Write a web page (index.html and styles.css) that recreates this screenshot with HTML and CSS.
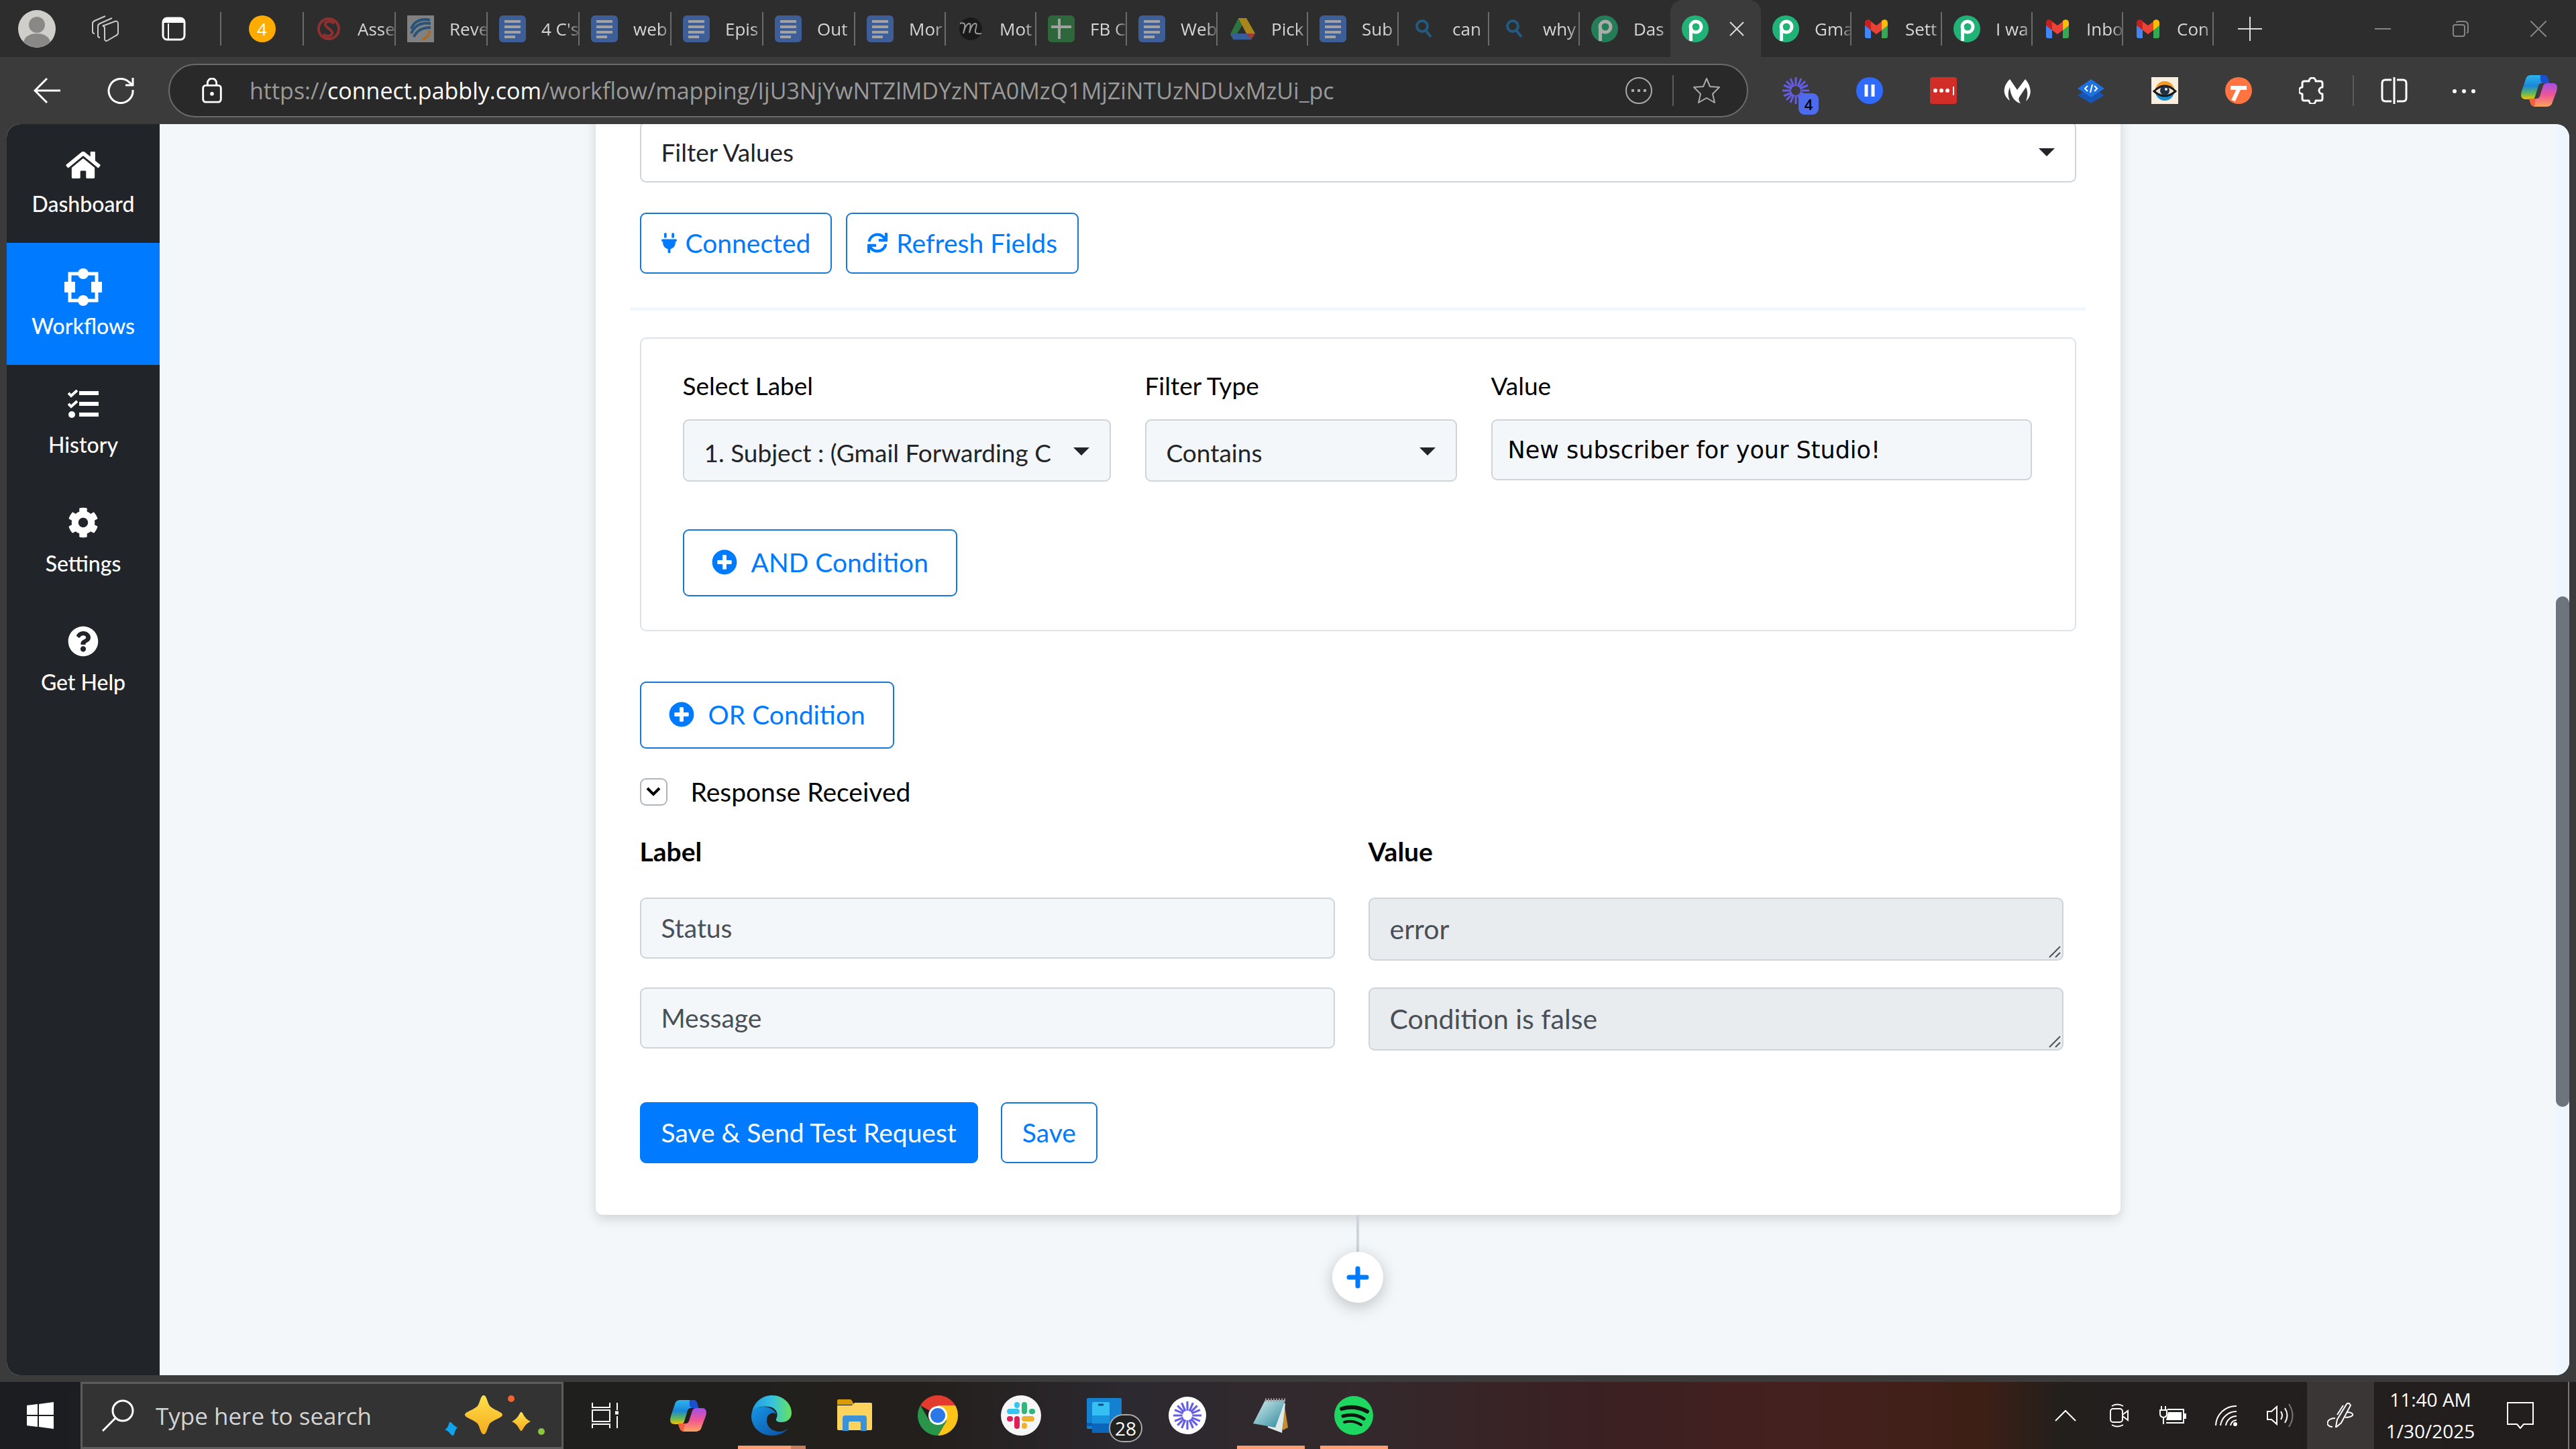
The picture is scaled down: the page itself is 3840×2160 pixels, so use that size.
FILE: index.html
```html
<!DOCTYPE html>
<html lang="en">
<head>
  <meta charset="UTF-8" />
  <title>Pabbly Connect</title>
  <link rel="stylesheet" href="styles.css">
</head>
<body>
  <!-- Shared icons -->
  <svg class="defs" aria-hidden="true">
    <defs>
      <linearGradient id="cpA" x1="0" y1="0" x2="0" y2="1">
        <stop offset="0" stop-color="#2bb5ef"/><stop offset=".45" stop-color="#1a86d8"/><stop offset=".75" stop-color="#5fb65c"/><stop offset="1" stop-color="#f5c400"/>
      </linearGradient>
      <linearGradient id="cpB" x1="0" y1="0" x2="0" y2="1">
        <stop offset="0" stop-color="#a44fe8"/><stop offset=".5" stop-color="#ee5596"/><stop offset="1" stop-color="#ffa35c"/>
      </linearGradient>
      <linearGradient id="edgeA" x1="0" y1="0" x2="1" y2="0">
        <stop offset="0" stop-color="#1f9be0"/><stop offset=".5" stop-color="#35c1e0"/><stop offset="1" stop-color="#66e35a"/>
      </linearGradient>
      <linearGradient id="edgeB" x1="0" y1="0" x2="1" y2="1">
        <stop offset="0" stop-color="#1795e6"/><stop offset="1" stop-color="#0b4f9e"/>
      </linearGradient>
      <linearGradient id="star" x1="0" y1="0" x2="0" y2="1">
        <stop offset="0" stop-color="#ffe14d"/><stop offset="1" stop-color="#f5ab1c"/>
      </linearGradient>
      <linearGradient id="note" x1="0" y1="0" x2="1" y2="1">
        <stop offset="0" stop-color="#d5f0f2"/><stop offset="1" stop-color="#2b8599"/>
      </linearGradient>
    </defs>
    <symbol id="docs" viewBox="0 0 40 40"><rect width="40" height="40" rx="6" fill="#4a7fe0"/><path d="M8 9h24M8 17h24M8 25h24M8 32h16" stroke="#f1f1f1" stroke-width="4"/></symbol>
    <symbol id="sheets" viewBox="0 0 40 40"><rect width="40" height="40" rx="6" fill="#2f8f47"/><path d="M5 17h30M17 5v30" stroke="#f1f1f1" stroke-width="4"/></symbol>
    <symbol id="find" viewBox="0 0 40 40"><g fill="none" stroke="#1e78b8" stroke-width="4"><circle cx="18" cy="16" r="8"/><path d="M23 22l8 10"/></g></symbol>
    <symbol id="drive" viewBox="0 0 40 40"><path d="M14 4h12L13 26 7 37 2 28z" fill="#2ea44f"/><path d="M14 4h12l13 23H26z" fill="#fdc00f"/><path d="M2 28l5 8h26l6-9H13z" fill="#3f7de8"/><path d="M26 27h13l-6 9z" fill="#e8453c"/></symbol>
    <symbol id="pabbly" viewBox="0 0 40 40"><circle cx="20" cy="20" r="20" fill="#20b276"/><g fill="none" stroke="#fff" stroke-width="5"><circle cx="21" cy="17" r="8"/><path d="M13.500 17v21"/></g></symbol>
    <symbol id="gmail" viewBox="0 0 40 40"><path d="M3 10v21c0 2 1 3 3 3h6V14z" fill="#4285f4"/><path d="M37 10v21c0 2-1 3-3 3h-6V14z" fill="#34a853"/><path d="M28 14V22l9-7V11c0-5-5-6-9-3z" fill="#fbbc04"/><path d="M12 22V9l8 6 8-6v13l-8 6z" fill="#ea4335"/><path d="M3 11v4l9 7V8C8 5 3 6 3 11z" fill="#c5221f"/></symbol>
    <symbol id="copilot" viewBox="0 0 56 50"><path d="M16 2h19c5 0 6 4 8 12H32c-4 0-5 3-6 7l-4 13c-1 3-3 4-6 4H8c-7 0-8-5-6-12L8 8c1-4 4-6 8-6z" fill="url(#cpA)"/><path d="M30 2h6c4 0 6 4 7 12H33c-2-1-4-4-3-12z" fill="#1c4fd0"/><path d="M13 37h11c4 0 5-3 6-7l4-12c1-3 3-4 6-4h8c7 0 8 5 6 12l-6 16c-1 5-5 7-9 7H22c-6 0-7-5-9-12z" fill="url(#cpB)"/><path d="M13 37h10l-2 12c-5-1-6-5-8-12z" fill="#f2603c"/></symbol>
    <symbol id="burst" viewBox="0 0 40 40"><path d="M20 0v13M20 27v13M0 20h13M27 20h13M6 6l9 9M25 25l9 9M34 6l-9 9M15 25l-9 9M12 2l5 12M23 26l5 12M28 2l-5 12M17 26l-5 12M2 12l12 5M26 23l12 5M38 12l-12 5M14 23L2 28" stroke="#655de8" stroke-width="3"/></symbol>
    <symbol id="plus-circle" viewBox="0 0 512 512"><path d="M256 8C119 8 8 119 8 256s111 248 248 248 248-111 248-248S393 8 256 8zm144 276c0 6.600-5.400 12-12 12h-92v92c0 6.600-5.400 12-12 12h-56c-6.600 0-12-5.400-12-12v-92h-92c-6.600 0-12-5.400-12-12v-56c0-6.600 5.400-12 12-12h92v-92c0-6.600 5.400-12 12-12h56c6.600 0 12 5.400 12 12v92h92c6.600 0 12 5.400 12 12v56z"/></symbol>
    <symbol id="grip" viewBox="0 0 18 18"><path d="M1 17L17 1M10 17l7-7" stroke="#4d5154" stroke-width="2"/></symbol>
  </svg>

  <!-- Tab strip -->
  <header class="tabstrip">
    <div class="tab-tools">
      <button class="avatar" aria-label="Profile"><svg viewBox="0 0 56 56"><circle cx="28" cy="28" r="28" fill="#cfcecb"/><circle cx="28" cy="22" r="12" fill="#8a8886"/><path d="M8 47c3-9 11-12 20-12s17 3 20 12a28 28 0 0 1-40 0z" fill="#8a8886"/></svg></button>
      <button aria-label="Workspaces"><svg class="i40" viewBox="0 0 40 40" fill="none" stroke="#c9c9c9" stroke-width="2"><path d="M18 15l16-6c3-1 5 0 5 3v14c0 2-1 3-3 4l-12 7c-3 2-5 1-5-2V19c0-2-1-3-3-4z"/><path d="M12 33c-2 0-3-1-3-3V16c0-2 1-3 3-4l18-8M4 27c-2 0-3-1-3-3V12c0-2 1-3 3-4l16-7"/></svg></button>
      <button aria-label="Tab actions"><svg class="i36" viewBox="0 0 36 36" fill="none" stroke="#fff" stroke-width="3"><rect x="2" y="2" width="32" height="32" rx="6"/><path d="M2 8h32M10 10v24" stroke-width="2"/><path d="M4 6h28" stroke-width="6"/></svg></button>
    </div>
    <div class="pinned"><span class="count">4</span></div>
    <nav class="tabs wide">
      <a href="#" class="tab asleep"><svg viewBox="0 0 40 40" fill="none" stroke="#c33" stroke-width="4"><circle cx="20" cy="20" r="15"/><path d="M28 12c-6-6-17-2-12 4l8 7c5 6-5 11-12 5"/></svg><span>Asse</span></a>
      <a href="#" class="tab asleep"><svg viewBox="0 0 40 40" fill="none"><rect width="40" height="40" fill="#b9b9b9"/><path d="M6 20C10 8 22 4 34 7M6 27c5-12 15-17 29-15M10 32c4-9 12-14 25-14" stroke="#256fae" stroke-width="4"/><path d="M33 22c1 7-4 12-11 14" stroke="#f29a2e" stroke-width="4"/></svg><span>Reve</span></a>
      <a href="#" class="tab asleep"><svg><use href="#docs"/></svg><span>4 C's</span></a>
      <a href="#" class="tab asleep"><svg><use href="#docs"/></svg><span>web</span></a>
      <a href="#" class="tab asleep"><svg><use href="#docs"/></svg><span>Epis</span></a>
      <a href="#" class="tab asleep"><svg><use href="#docs"/></svg><span>Out</span></a>
    </nav>
    <nav class="tabs">
      <a href="#" class="tab asleep"><svg><use href="#docs"/></svg><span>Mor</span></a>
      <a href="#" class="tab asleep"><svg viewBox="0 0 40 40"><circle cx="20" cy="20" r="17" fill="#0d0d0d"/><path d="M4 12c6-2 8 0 7 6l-2 9c2-8 5-15 9-15 3 0 1 8 0 14 2-8 5-14 9-14 3 0 1 6 0 10-1 5 2 6 9 5" fill="none" stroke="#ddd" stroke-width="2"/></svg><span>Mot</span></a>
      <a href="#" class="tab asleep"><svg><use href="#sheets"/></svg><span>FB C</span></a>
      <a href="#" class="tab asleep"><svg><use href="#docs"/></svg><span>Web</span></a>
      <a href="#" class="tab asleep"><svg><use href="#drive"/></svg><span>Pick</span></a>
      <a href="#" class="tab asleep"><svg><use href="#docs"/></svg><span>Sub</span></a>
      <a href="#" class="tab asleep"><svg><use href="#find"/></svg><span>can</span></a>
      <a href="#" class="tab asleep"><svg><use href="#find"/></svg><span>why</span></a>
      <a href="#" class="tab asleep last"><svg><use href="#pabbly"/></svg><span>Das</span></a>
      <div class="tab current"><svg><use href="#pabbly"/></svg><button aria-label="Close tab"><svg class="i24" viewBox="0 0 24 24" stroke="#ddd" stroke-width="2"><path d="M2 2l20 20M22 2L2 22"/></svg></button></div>
      <a href="#" class="tab"><svg><use href="#pabbly"/></svg><span>Gma</span></a>
      <a href="#" class="tab"><svg><use href="#gmail"/></svg><span>Sett</span></a>
      <a href="#" class="tab"><svg><use href="#pabbly"/></svg><span>I wa</span></a>
      <a href="#" class="tab"><svg><use href="#gmail"/></svg><span>Inbo</span></a>
      <a href="#" class="tab"><svg><use href="#gmail"/></svg><span>Con</span></a>
    </nav>
    <button class="new-tab" aria-label="New tab"><svg class="i36" viewBox="0 0 36 36" stroke="#ddd" stroke-width="2"><path d="M18 0v36M0 18h36"/></svg></button>
    <div class="window-controls">
      <button aria-label="Minimize"><svg class="i24" viewBox="0 0 24 24" stroke="#858585" stroke-width="2"><path d="M0 12h24"/></svg></button>
      <button aria-label="Restore"><svg class="i24" viewBox="0 0 24 24" fill="none" stroke="#858585" stroke-width="2"><rect x="1" y="6" width="17" height="17" rx="3"/><path d="M6 3c0-1 1-2 3-2h8c4 0 6 2 6 6v8c0 2-1 3-2 3"/></svg></button>
      <button aria-label="Close"><svg class="i24" viewBox="0 0 24 24" stroke="#858585" stroke-width="2"><path d="M0 0l24 24M24 0L0 24"/></svg></button>
    </div>
  </header>

  <!-- Address bar and extensions -->
  <div class="toolbar">
    <button class="back" aria-label="Back"><svg class="i40" viewBox="0 0 40 40" fill="none" stroke="#fff" stroke-width="3"><path d="M20 2L2 20l18 18M2 20h38"/></svg></button>
    <button class="reload" aria-label="Reload"><svg class="i40" viewBox="0 0 40 40" fill="none" stroke="#fff" stroke-width="3"><path d="M38 19a18 18 0 1 1-6-12l6 5M38 1v11H27"/></svg></button>
    <div class="address">
      <svg class="lock" viewBox="0 0 32 40" fill="none" stroke="#fff" stroke-width="3"><rect x="2" y="12" width="28" height="26" rx="4"/><path d="M9 12V8a7 7 0 0 1 14 0v4"/><circle cx="16" cy="25" r="2" fill="#fff" stroke-width="2"/></svg>
      <div class="url" role="textbox" aria-label="Address">https://<b>connect.pabbly.com</b>/workflow/mapping/IjU3NjYwNTZlMDYzNTA0MzQ1MjZiNTUzNDUxMzUi_pc</div>
      <button aria-label="Page info"><svg class="i40" viewBox="0 0 40 40" fill="none" stroke="#aaa" stroke-width="2"><circle cx="20" cy="20" r="19"/><path d="M9 20h4M18 20h4M27 20h4" stroke-width="4"/></svg></button>
      <button class="favorite" aria-label="Favorite"><svg class="i40" viewBox="0 0 40 40" fill="none" stroke="#aaa" stroke-width="2" stroke-linejoin="round"><path d="M20 2l5 12 14 1-10 10 3 13-12-7-12 7 3-13L1 15l14-1z"/></svg></button>
    </div>
    <div class="extensions">
      <button class="badged" aria-label="Loom"><svg class="i40"><use href="#burst"/></svg><span class="badge">4</span></button>
      <button aria-label="Pause"><svg class="i40" viewBox="0 0 40 40"><circle cx="20" cy="20" r="20" fill="#2f6bff"/><path d="M15 11v18M25 11v18" stroke="#fff" stroke-width="5"/></svg></button>
      <button aria-label="Passwords"><svg class="i40" viewBox="0 0 40 40"><rect width="40" height="40" rx="4" fill="#d32d27"/><g fill="#fff"><circle cx="8" cy="20" r="3"/><circle cx="17" cy="20" r="3"/><circle cx="26" cy="20" r="3"/><path d="M34 14h2v13h-2z"/></g></svg></button>
      <button aria-label="Malware guard"><svg class="i40" viewBox="0 0 40 40"><path d="M9 3l11 16L32 3c8 9 12 23 1 33 3-9 3-15 0-21L23 30q-2 4 2 9c-9-2-15-11-16-24-3 7-3 14 0 20C-3 26-1 13 9 3z" fill="#fff"/></svg></button>
      <button aria-label="Developer tools"><svg class="i40" viewBox="0 0 40 40"><path d="M20 15l20 12-20 12L0 27z" fill="#1556b5"/><path d="M20 3l20 14-20 13L0 17z" fill="#1d72e0"/><path d="M15 13l-4 4 4 4M25 13l4 4-4 4M22 11l-3 12" fill="none" stroke="#fff" stroke-width="2"/></svg></button>
      <button aria-label="Vision"><svg class="i40" viewBox="0 0 40 40"><rect width="40" height="40" fill="#f8efdf"/><circle cx="20" cy="21" r="14" fill="#1b8fd2"/><path d="M6 20a14 14 0 0 1 28 0z" fill="#f39a24"/><path d="M4 21q16-16 32 0-16 14-32 0z" fill="#efe3cf" stroke="#181818" stroke-width="3"/><circle cx="20" cy="20" r="7" fill="#1f3145"/><circle cx="22" cy="18" r="2" fill="#fff"/></svg></button>
      <button aria-label="Text tool"><svg class="i40" viewBox="0 0 40 40"><circle cx="20" cy="20" r="20" fill="#ff7440"/><path d="M8 16h24M21 16l-9 19" stroke="#fff" stroke-width="6"/></svg></button>
      <button aria-label="Extensions"><svg class="i40" viewBox="0 0 40 40" fill="none" stroke="#fff" stroke-width="3" stroke-linejoin="round"><path d="M8 6h7a5 5 0 0 1 10 0h7q3 0 3 3v6a5 5 0 0 0 0 10v7q0 3-3 3h-7a5 5 0 0 1-10 0H8q-3 0-3-3v-7a5 5 0 0 1 0-10V9q0-3 3-3z"/></svg></button>
    </div>
    <div class="browser-menu">
      <button aria-label="Split screen"><svg class="i40" viewBox="0 0 40 40" fill="none" stroke="#fff" stroke-width="3"><path d="M16 4H7q-5 0-5 5v22q0 5 5 5h9M24 4h9q5 0 5 5v22q0 5-5 5h-9M20 0v40"/></svg></button>
      <button aria-label="Menu"><svg class="i40" viewBox="0 0 40 40" fill="#fff"><circle cx="6" cy="21" r="3"/><circle cx="20" cy="21" r="3"/><circle cx="34" cy="21" r="3"/></svg></button>
      <button aria-label="Copilot"><svg class="copilot"><use href="#copilot"/></svg></button>
    </div>
  </div>

  <!-- Web page -->
  <div class="viewport">
    <nav class="sidebar">
      <a href="#"><svg class="home" viewBox="0 32 576 448"><path d="M280.370 148.260L96 300.110V464a16 16 0 0 0 16 16l112.060-.290a16 16 0 0 0 15.920-16V368a16 16 0 0 1 16-16h64a16 16 0 0 1 16 16v95.640a16 16 0 0 0 16 16.050L464 480a16 16 0 0 0 16-16V300L295.670 148.260a12.190 12.190 0 0 0-15.300 0zM571.600 251.470L488 182.560V44.050a12 12 0 0 0-12-12h-56a12 12 0 0 0-12 12v72.610L318.470 43a48 48 0 0 0-61 0L4.340 251.470a12 12 0 0 0-1.600 16.900l25.500 31A12 12 0 0 0 45.150 301l235.220-193.740a12.190 12.190 0 0 1 15.300 0L530.900 301a12 12 0 0 0 16.900-1.600l25.500-31a12 12 0 0 0-1.700-16.930z"/></svg>Dashboard</a>
      <a href="#" class="selected"><svg class="i56" viewBox="0 0 56 56"><path d="M8 8h40v40H8z" fill="none" stroke="#fff" stroke-width="5"/><circle cx="28" cy="8" r="8"/><circle cx="28" cy="48" r="8"/><path d="M0 20h16v16H0zM40 20h16v16H40z"/></svg>Workflows</a>
      <a href="#"><svg class="i46" viewBox="0 0 46 46"><path d="M17 7h29M17 23h29M17 39h29" stroke="#fff" stroke-width="6"/><path d="M1 7l4 4 9-8M1 23l4 4 9-8" fill="none" stroke="#fff" stroke-width="4"/><circle cx="6" cy="39" r="5"/></svg>History</a>
      <a href="#"><svg class="i46" viewBox="0 0 512 512"><path d="M487.400 315.700l-42.600-24.600c4.300-23.200 4.300-47 0-70.200l42.600-24.600c4.900-2.800 7.100-8.600 5.500-14-11.100-35.600-30-67.800-54.700-94.600-3.800-4.100-10-5.100-14.800-2.300L380.800 110c-17.900-15.400-38.500-27.300-60.800-35.100V25.800c0-5.600-3.900-10.500-9.400-11.700-36.700-8.200-74.300-7.800-109.200 0-5.500 1.200-9.400 6.100-9.400 11.700V75c-22.200 7.900-42.800 19.800-60.800 35.100L88.700 85.500c-4.900-2.800-11-1.900-14.800 2.300-24.700 26.700-43.600 58.900-54.700 94.600-1.700 5.400.600 11.200 5.500 14L67.300 221c-4.300 23.200-4.300 47 0 70.200l-42.600 24.600c-4.900 2.800-7.100 8.600-5.500 14 11.100 35.600 30 67.800 54.700 94.600 3.800 4.100 10 5.100 14.800 2.300l42.600-24.600c17.900 15.400 38.500 27.300 60.800 35.100v49.200c0 5.600 3.900 10.500 9.400 11.700 36.700 8.200 74.300 7.800 109.200 0 5.500-1.200 9.400-6.100 9.400-11.700v-49.200c22.200-7.900 42.800-19.800 60.800-35.100l42.600 24.600c4.900 2.800 11 1.900 14.800-2.300 24.700-26.700 43.600-58.900 54.700-94.600 1.500-5.500-.700-11.300-5.600-14.100zM256 336c-44.100 0-80-35.900-80-80s35.900-80 80-80 80 35.900 80 80-35.900 80-80 80z"/></svg>Settings</a>
      <a href="#"><svg class="i46" viewBox="0 0 512 512"><path d="M504 256c0 136.997-111.043 248-248 248S8 392.997 8 256C8 119.083 119.043 8 256 8s248 111.083 248 248zM262.655 90c-54.497 0-89.255 22.957-116.549 63.758-3.536 5.286-2.353 12.415 2.715 16.258l34.699 26.310c5.205 3.947 12.621 3.008 16.665-2.122 17.864-22.658 30.113-35.797 57.303-35.797 20.429 0 45.698 13.148 45.698 32.958 0 14.976-12.363 22.667-32.534 33.976C247.128 238.528 216 254.941 216 296v4c0 6.627 5.373 12 12 12h56c6.627 0 12-5.373 12-12v-1.333c0-28.462 83.186-29.647 83.186-106.667 0-58.002-60.165-102-116.531-102zM256 338c-25.365 0-46 20.635-46 46 0 25.364 20.635 46 46 46s46-20.636 46-46c0-25.365-20.635-46-46-46z"/></svg>Get Help</a>
    </nav>

    <main>
      <section class="card">
        <div class="select plain">
          <select aria-label="Action event"><option>Filter Values</option></select>
        </div>
        <div class="actions">
          <button class="btn"><svg class="plug" viewBox="0 0 384 512"><path d="M320 32a32 32 0 0 0-64 0v96h64zm48 128H16a16 16 0 0 0-16 16v32a16 16 0 0 0 16 16h16v32a160 160 0 0 0 128 157V512h64v-99A160 160 0 0 0 352 256v-32h16a16 16 0 0 0 16-16v-32a16 16 0 0 0-16-16zM128 32a32 32 0 0 0-64 0v96h64z"/></svg>Connected</button>
          <button class="btn"><svg class="sync" viewBox="0 0 512 512"><path d="M440.650 12.570l4 82.770A247.160 247.160 0 0 0 255.830 8C134.730 8 33.910 94.920 12.290 209.820A12 12 0 0 0 24.090 224h49.050a12 12 0 0 0 11.670-9.260 175.910 175.910 0 0 1 317-56.940l-101.460-4.860a12 12 0 0 0-12.570 12v47.410a12 12 0 0 0 12 12H500a12 12 0 0 0 12-12V12a12 12 0 0 0-12-12h-47.370a12 12 0 0 0-11.980 12.570zM255.830 432a175.610 175.610 0 0 1-146-77.800l101.800 4.870a12 12 0 0 0 12.570-12v-47.400a12 12 0 0 0-12-12H12a12 12 0 0 0-12 12V500a12 12 0 0 0 12 12h47.350a12 12 0 0 0 12-12.600l-4.150-82.570A247.170 247.170 0 0 0 255.830 504c121.110 0 221.930-86.920 243.550-201.820a12 12 0 0 0-11.800-14.180h-49.050a12 12 0 0 0-11.670 9.260A175.860 175.860 0 0 1 255.830 432z"/></svg>Refresh Fields</button>
        </div>
        <hr>

        <div class="filter-box">
          <div class="filter-row">
            <div>
              <label for="field">Select Label</label>
              <div class="select"><select id="field"><option>1. Subject : (Gmail Forwarding C</option></select></div>
            </div>
            <div>
              <label for="type">Filter Type</label>
              <div class="select"><select id="type"><option>Contains</option></select></div>
            </div>
            <div>
              <label for="value">Value</label>
              <input type="text" id="value" class="match" value="New subscriber for your Studio!">
            </div>
          </div>
          <button class="btn condition"><svg><use href="#plus-circle"/></svg>AND Condition</button>
        </div>

        <button class="btn condition"><svg><use href="#plus-circle"/></svg>OR Condition</button>

        <button class="response-toggle"><span class="box"><svg viewBox="0 0 24 24" fill="none" stroke="#000" stroke-width="4"><path d="M3 7l9 9 9-9"/></svg></span>Response Received</button>

        <div class="response">
          <h3>Label</h3>
          <h3>Value</h3>
          <input type="text" aria-label="Label 1" value="Status" readonly>
          <div class="area"><textarea aria-label="Status" rows="1" readonly>error</textarea><svg><use href="#grip"/></svg></div>
          <input type="text" aria-label="Label 2" value="Message" readonly>
          <div class="area"><textarea aria-label="Message" rows="1" readonly>Condition is false</textarea><svg><use href="#grip"/></svg></div>
        </div>

        <div class="save-row">
          <button class="btn primary">Save &amp; Send Test Request</button>
          <button class="btn">Save</button>
        </div>
      </section>
      <div class="connector"></div>
      <button class="add-step" aria-label="Add step"><svg viewBox="0 0 34 34" stroke="#007bff" stroke-width="7" stroke-linecap="round"><path d="M17 4v26M4 17h26"/></svg></button>
    </main>
    <div class="scrollbar"><div class="thumb"></div></div>
  </div>

  <!-- Taskbar -->
  <footer class="taskbar">
    <button class="start" aria-label="Start"><svg class="i40" viewBox="0 0 40 40" fill="#fff"><path d="M0 5l16-2v16H0zM18 3l22-3v19H18zM0 21h16v16L0 35zM18 21h22v19l-22-3z"/></svg></button>
    <div class="search">
      <svg class="lens" viewBox="0 0 48 48" fill="none" stroke="#fff" stroke-width="3"><circle cx="31" cy="17" r="15"/><path d="M20 28L1 47"/></svg>
      <input type="text" aria-label="Search" placeholder="Type here to search">
      <svg class="sparkles" viewBox="0 0 150 60"><path d="M58 0c4 0 5 8 8 14 3 7 20 10 20 15s-17 8-20 15c-3 6-4 14-8 14s-5-8-8-14c-3-7-20-10-20-15s17-8 20-15c3-6 4-14 8-14z" fill="url(#star)"/><path d="M114 25c3 0 3 9 14 14-11 5-11 14-14 14s-3-9-14-14c11-5 11-14 14-14z" fill="url(#star)"/><path d="M8 40c3 0 4 5 11 8-5 4-4 12-7 12s-4-6-12-9c7-3 5-11 8-11z" fill="#0fa5ee"/><circle cx="99" cy="5" r="5" fill="#f0642d"/><circle cx="144" cy="54" r="5" fill="#8cc63f"/></svg>
    </div>
    <div class="apps">
      <button aria-label="Task view"><svg class="i40" viewBox="0 0 40 40" fill="none" stroke="#fff" stroke-width="2"><rect x="1" y="12" width="26" height="17"/><path d="M1 1v7h26V1M1 39v-6h26v6M38 1v11M38 21v18"/><path d="M35 16h5" stroke-width="5"/></svg></button>
      <button aria-label="Copilot"><svg class="copilot"><use href="#copilot"/></svg></button>
      <button class="running stacked" aria-label="Edge"><svg class="i60" viewBox="0 0 60 60"><path d="M1 25C4 10 16 0 31 0c17 0 29 13 29 26 0 10-8 14-15 14-6 0-9-2-8-5 4-6 1-16-10-18C16 15 5 18 1 25z" fill="url(#edgeA)"/><path d="M0 31C0 20 9 17 18 17c10 0 17 5 19 11-5-4-13-1-14 8-1 10 8 18 19 18 5 0 9-2 13-5-5 7-14 11-24 11C13 60 0 47 0 31z" fill="url(#edgeB)"/></svg></button>
      <button aria-label="File Explorer"><svg class="i52" viewBox="0 0 52 52"><path d="M0 4q0-2 2-2h17q2 0 3 2l3 6H0z" fill="#d99a08"/><path d="M0 11h22l4-4h24q2 0 2 2v37q0 2-2 2H2q-2 0-2-2z" fill="#fcd35c"/><path d="M8 49V30q0-4 4-4h28q4 0 4 4v19h-9V37q0-2-2-2H19q-2 0-2 2v12z" fill="#3a92d8"/></svg></button>
      <button aria-label="Chrome"><svg class="i60" viewBox="0 0 60 60"><path d="M30 30L4 15a30 30 0 0 1 52 0z" fill="#e33b2e"/><path d="M30 30V15h26a30 30 0 0 1-26 45l13-22z" fill="#fcc419"/><path d="M30 30l13 8-13 22A30 30 0 0 1 4 15l13 22z" fill="#28954a"/><circle cx="30" cy="30" r="14" fill="#fff"/><circle cx="30" cy="30" r="11" fill="#2b78e9"/></svg></button>
      <button aria-label="Slack"><svg class="i60" viewBox="0 0 60 60"><circle cx="30" cy="30" r="30" fill="#f6f6f6"/><g stroke-width="8" stroke-linecap="round"><path d="M13 24h11M24 14v1" stroke="#36c5f0"/><path d="M35 14v10M46 24h1" stroke="#2eb67d"/><path d="M46 35H35M35 46v-1" stroke="#ecb22e"/><path d="M24 46V35M13 35h1" stroke="#e01e5a"/></g></svg></button>
      <button class="badged" aria-label="Phone Link"><svg class="i52" viewBox="0 0 52 52"><rect width="52" height="46" rx="2" fill="#1480d0"/><path d="M0 37h12v5H0z" fill="#0d5ba8"/><rect x="8" y="6" width="26" height="46" rx="2" fill="#35bff2"/><path d="M8 26h26v24q0 2-2 2H10q-2 0-2-2z" fill="#1793dd"/><path d="M8 38h26v12q0 2-2 2H10q-2 0-2-2z" fill="#0b65bb"/><path d="M17 10h8" stroke="#0c4d88" stroke-width="3"/></svg><span class="notice">28</span></button>
      <button aria-label="Loom"><svg class="i56" viewBox="0 0 56 56"><circle cx="28" cy="28" r="28" fill="#fff"/><use href="#burst" x="7" y="7" width="42" height="42"/></svg></button>
      <button class="running" aria-label="Notepad"><svg class="i52" viewBox="0 0 52 52"><path d="M46 6l6 38-8 4z" fill="#c58c34"/><path d="M20 4l28 4-5 44-21-8z" fill="#dfe9ea"/><path d="M18 3h30L33 44 0 38z" fill="url(#note)"/><path d="M18 3h31" stroke="#999" stroke-width="5" stroke-dasharray="2 2"/></svg></button>
      <button class="running" aria-label="Spotify"><svg class="i60" viewBox="0 0 60 60"><circle cx="30" cy="30" r="29" fill="#1ed760"/><g fill="none" stroke="#10140f" stroke-linecap="round"><path d="M12 20q20-6 38 4" stroke-width="6"/><path d="M14 31q17-5 31 4" stroke-width="5"/><path d="M16 40q13-4 25 4" stroke-width="4"/></g></svg></button>
    </div>
    <div class="tray">
      <button aria-label="Hidden icons"><svg class="i32" viewBox="0 0 32 32" fill="none" stroke="#fff" stroke-width="2"><path d="M1 24l15-15 15 15"/></svg></button>
      <button aria-label="Meet now"><svg class="i36" viewBox="0 0 36 36" fill="none" stroke="#fff" stroke-width="2"><rect x="5" y="8" width="18" height="20" rx="4"/><path d="M23 17l8-6v14l-8-6M7 4q8-5 17 0M7 32q8 5 17 0"/></svg></button>
      <button aria-label="Battery"><svg class="i40" viewBox="0 0 40 40" fill="none" stroke="#fff" stroke-width="2"><path d="M12 11h24v20H10"/><path d="M13 15h20v12H10zM37 17h3v8h-3z" fill="#fff" stroke="none"/><path d="M3 6v6M9 6v6M1 12h10v6q0 4-5 5-5-1-5-5zM6 23v10"/></svg></button>
      <button aria-label="Network"><svg class="i36" viewBox="0 0 36 36" fill="none" stroke="#fff" stroke-width="2"><path d="M2 33A30 30 0 0 1 33 4M9 33a24 24 0 0 1 24-21M17 33a16 16 0 0 1 16-14M24 33a9 9 0 0 1 9-8"/><circle cx="31" cy="31" r="3" fill="#fff" stroke="none"/></svg></button>
      <button aria-label="Volume"><svg class="i40" viewBox="0 0 40 40" fill="none" stroke="#fff" stroke-width="2"><path d="M1 14h6l8-7v26l-8-7H1zM21 14q4 6 0 12M27 9q7 11 0 22"/><path d="M33 3q11 17 0 34" stroke="#777"/></svg></button>
      <button class="pen" aria-label="Windows Ink"><svg class="i40" viewBox="0 0 40 40" fill="none" stroke="#fff" stroke-width="2"><path d="M13 37l2-11L29 3q4-3 6 2L21 31l-7 6zM24 5L15 19M12 24c-14 0-15 13-4 13M30 15c9 0 14 7-3 8"/></svg></button>
      <time class="clock"><span>11:40 AM</span><span>1/30/2025</span></time>
      <button class="notifications" aria-label="Notifications"><svg class="i40" viewBox="0 0 40 40" fill="none" stroke="#fff" stroke-width="2"><path d="M1 1h38v32H25l-5 6-5-6H1z"/></svg></button>
    </div>
  </footer>
</body>
</html>
```
FILE: styles.css
```css
* {
  box-sizing: border-box;
}
body {
  margin: 0;
  height: 100vh;
  display: flex;
  flex-direction: column;
  overflow: hidden;
  background: #3b3b3b;
  color: #000;
  font-family: "Open Sans", "Noto Sans", sans-serif;
}
button {
  border: none;
  background: none;
  padding: 0;
  font: inherit;
  color: inherit;
  display: flex;
  align-items: center;
  justify-content: center;
  cursor: pointer;
}
a {
  color: inherit;
  text-decoration: none;
}
svg {
  flex: none;
}
.defs {
  position: absolute;
  width: 0;
  height: 0;
}
.i24 { width: 24px; height: 24px; }
.i32 { width: 32px; height: 32px; }
.i36 { width: 36px; height: 36px; }
.i40 { width: 40px; height: 40px; }
.i46 { width: 46px; height: 46px; }
.i52 { width: 52px; height: 52px; }
.i56 { width: 56px; height: 56px; }
.i60 { width: 60px; height: 60px; }
.copilot { width: 56px; height: 50px; }

/* Tab strip */
.tabstrip {
  display: flex;
  align-items: center;
  height: 85px;
  flex: none;
  background: #2d2d2d;
  color: #d6d6d6;
  font-size: 26px;
}
.tab-tools {
  display: flex;
  align-items: center;
  gap: 46px;
  width: 330px;
  height: 50px;
  padding-left: 27px;
  border-right: 2px solid #6b6b6b;
}
.tab-tools button {
  flex: none;
  width: 56px;
}
.avatar svg {
  width: 56px;
  height: 56px;
}
.pinned {
  width: 123px;
  height: 50px;
  display: flex;
  align-items: center;
  justify-content: center;
  border-right: 2px solid #6b6b6b;
}
.count {
  width: 40px;
  height: 40px;
  border-radius: 50%;
  background: #ffab00;
  color: #fff;
  line-height: 40px;
  text-align: center;
}
.tabs {
  display: flex;
  height: 85px;
  align-items: center;
}
.tab {
  width: 135px;
  height: 50px;
  display: flex;
  align-items: center;
  padding-left: 17px;
  border-right: 2px solid #6b6b6b;
  white-space: nowrap;
}
.wide .tab {
  width: 137px;
}
.tab > svg {
  width: 40px;
  height: 40px;
  margin-right: 23px;
}
.tab span {
  flex: 1;
  min-width: 0;
  overflow: hidden;
  mask-image: linear-gradient(to right, #000 70%, rgba(0, 0, 0, 0.3));
}
.asleep > svg {
  opacity: 0.6;
}
.tab.last {
  border-color: transparent;
}
.tab.current {
  height: 85px;
  border: none;
  border-radius: 18px 18px 0 0;
  background: #3b3b3b;
}
.tab.current > svg {
  margin-right: 30px;
}
.new-tab {
  margin-left: 36px;
}
.window-controls {
  display: flex;
  gap: 92px;
  margin-left: auto;
  padding-right: 44px;
}

/* Toolbar */
.toolbar {
  display: flex;
  align-items: center;
  height: 100px;
  flex: none;
}
.back {
  margin-left: 50px;
}
.reload {
  margin-left: 70px;
}
.address {
  flex: 1;
  display: flex;
  align-items: center;
  height: 80px;
  margin-left: 51px;
  padding: 0 40px 0 47px;
  border: 2px solid #6a6a6a;
  border-radius: 40px;
  background: #292929;
}
.lock {
  width: 32px;
  height: 38px;
}
.url {
  flex: 1;
  margin-left: 40px;
  color: #9a9a9a;
  font-size: 34px;
  line-height: 46px;
  white-space: nowrap;
  overflow: hidden;
}
.url b {
  color: #fff;
  font-weight: 400;
}
.favorite {
  height: 46px;
  margin-left: 30px;
  padding-left: 29px;
  border-left: 2px solid #5c5c5c;
}
.extensions {
  display: flex;
  gap: 70px;
  margin-left: 51px;
  padding-right: 40px;
}
.badged {
  position: relative;
}
.badge {
  position: absolute;
  left: 24px;
  top: 24px;
  width: 30px;
  height: 32px;
  border-radius: 9px;
  background: #4f6bed;
  color: #000;
  font-size: 22px;
  font-weight: 600;
  line-height: 32px;
}
.browser-menu {
  display: flex;
  align-items: center;
  gap: 64px;
  height: 46px;
  padding: 0 27px 0 40px;
  border-left: 2px solid #5c5c5c;
}

/* Web page */
.viewport {
  flex: 1;
  display: flex;
  min-height: 0;
  margin: 0 10px 10px;
  border-radius: 20px;
  overflow: hidden;
  background: #f3f7fa;
  font-family: Lato, "Open Sans", sans-serif;
}
.sidebar {
  width: 228px;
  flex: none;
  background: #212529;
  color: #fff;
  font-size: 32px;
  font-weight: 500;
  line-height: 40px;
}
.sidebar a {
  display: flex;
  flex-direction: column;
  align-items: center;
  justify-content: flex-end;
  gap: 18px;
  height: 177px;
  padding-bottom: 38px;
}
.sidebar svg {
  fill: #fff;
}
.home {
  width: 52px;
  height: 40px;
}
.sidebar .selected {
  height: 182px;
  gap: 10px;
  background: #007bff;
}
main {
  flex: 1;
  overflow: hidden;
  display: flex;
  flex-direction: column;
  align-items: center;
  font-size: 37px;
  line-height: 44px;
}
.card {
  flex: none;
  width: 100%;
  max-width: 2273px;
  margin-top: -70px;
  padding: 66px 66px 77px;
  background: #fff;
  border-radius: 10px;
  box-shadow: 0 6px 18px rgba(0, 0, 0, 0.15);
}
.scrollbar {
  width: 20px;
  flex: none;
  display: flex;
  flex-direction: column;
  justify-content: flex-end;
  padding-bottom: 400px;
  background: #edf5ff;
}
.thumb {
  height: 761px;
  border-radius: 10px;
  background: #6c757d;
}

/* Form controls */
select,
input,
textarea {
  display: block;
  width: 100%;
  height: 91px;
  margin: 0;
  padding: 0 30px 2px;
  border: 2px solid #ced4da;
  border-radius: 9px;
  background: #f3f7fa;
  color: #495057;
  font: inherit;
  outline: none;
}
select {
  appearance: none;
  height: 93px;
  padding: 6px 84px 0 30px;
  color: #212529;
}
.select {
  position: relative;
}
.select::after {
  content: "";
  position: absolute;
  right: 32px;
  top: 42px;
  border: 12px solid transparent;
  border-top-color: #212529;
  border-bottom: none;
}
.plain select {
  height: 91px;
  padding: 0 84px 0 30px;
  background: #fff;
}
.plain::after {
  top: 40px;
}
textarea {
  height: 94px;
  padding: 23px 30px;
  resize: none;
  overflow: hidden;
  background: #e9ecef;
  font-size: 41px;
}
.area {
  position: relative;
}
.area svg {
  position: absolute;
  right: 4px;
  bottom: 4px;
  width: 18px;
  height: 18px;
}
.btn {
  height: 91px;
  padding: 0 30px 2px;
  border: 2px solid #1677d8;
  border-radius: 9px;
  background: #fff;
  color: #007bff;
  font-size: 39px;
}
.btn svg {
  fill: #007bff;
}
.btn .plug {
  width: 23px;
  height: 30px;
  margin-right: 13px;
}
.btn .sync {
  width: 30px;
  height: 30px;
  margin-right: 13px;
}
.btn.primary {
  border-color: #007bff;
  background: #007bff;
  color: #fff;
}
.btn.condition {
  height: 100px;
  padding: 0 41px 2px;
}
.condition svg {
  width: 38px;
  height: 38px;
  margin-right: 21px;
}

.actions {
  display: flex;
  gap: 21px;
  margin-top: 45px;
}
hr {
  height: 5px;
  margin: 50px -14px 40px;
  border: none;
  background: #f0f7ff;
}
.filter-box {
  margin-bottom: 75px;
  padding: 48px 64px 50px 62px;
  border: 2px solid #dae3ee;
  border-radius: 9px;
}
.filter-row {
  display: grid;
  grid-template-columns: 638fr 465fr 806fr;
  gap: 51px;
  margin-bottom: 71px;
}
.filter-row label {
  display: block;
  margin-bottom: 28px;
}
.match {
  padding: 0 23px;
  color: #000;
  font-family: "DejaVu Sans", sans-serif;
  font-size: 35px;
}
.response-toggle {
  gap: 35px;
  margin-top: 42px;
  font-size: 39px;
}
.box {
  width: 41px;
  height: 41px;
  display: flex;
  align-items: center;
  justify-content: center;
  border: 2px solid #adb5bd;
  border-radius: 9px;
}
.box svg {
  width: 24px;
  height: 24px;
}
.response {
  display: grid;
  grid-template-columns: 1fr 1fr;
  column-gap: 50px;
  row-gap: 40px;
  margin: 45px 19px 77px 0;
  font-size: 39px;
}
h3 {
  margin: 0 0 7px;
  font-size: 39px;
  font-weight: 700;
}
.save-row {
  display: flex;
  gap: 34px;
}
.connector {
  flex: none;
  width: 4px;
  height: 55px;
  background: #ced4da;
}
.add-step {
  flex: none;
  width: 76px;
  height: 76px;
  border-radius: 50%;
  background: #fff;
  box-shadow: 0 6px 24px rgba(0, 0, 0, 0.22);
}
.add-step svg {
  width: 34px;
  height: 34px;
}

/* Taskbar */
.taskbar {
  display: flex;
  height: 100px;
  flex: none;
  background: linear-gradient(to right, #1c1d21 0%, #1f1f1e 22%, #231f1c 36%, #2c2930 44%, #33292d 52%, #3b2022 62%, #45201e 70%, #3d1f16 77%, #231f1d 80%, #221e1d 100%);
  color: #fff;
}
.start {
  width: 120px;
}
.search {
  display: flex;
  align-items: center;
  width: 720px;
  padding: 0 24px 0 29px;
  border: 3px solid #5c5c5c;
  background: #333;
}
.lens {
  width: 48px;
  height: 48px;
}
.search input {
  flex: 1;
  min-width: 0;
  height: 80px;
  padding: 0 0 0 32px;
  border: none;
  background: none;
  font-size: 35px;
}
.search input::placeholder {
  color: #d4d4d4;
}
.sparkles {
  width: 150px;
  height: 60px;
}
.apps {
  display: flex;
}
.apps button {
  width: 124px;
}
.running {
  background: linear-gradient(#ff9d72, #ff9d72) center bottom / 101px 5px no-repeat;
}
.stacked {
  background: linear-gradient(to right, #ff9d72 78%, #c77c5c 78%) center bottom / 101px 5px no-repeat;
}
.notice {
  position: absolute;
  left: 69px;
  top: 48px;
  width: 50px;
  height: 42px;
  border: 2px solid #aaa;
  border-radius: 21px;
  background: #222;
  font-size: 28px;
  line-height: 38px;
}
.tray {
  display: flex;
  margin-left: auto;
  padding-right: 10px;
}
.tray button {
  width: 80px;
}
.tray .pen {
  width: 100px;
  background: #393635;
}
.clock {
  width: 168px;
  display: flex;
  flex-direction: column;
  justify-content: center;
  text-align: center;
  font-size: 28px;
  line-height: 47px;
}
.tray .notifications {
  width: 123px;
  justify-content: flex-start;
  padding-left: 30px;
  border-right: 2px solid #777;
}
```
